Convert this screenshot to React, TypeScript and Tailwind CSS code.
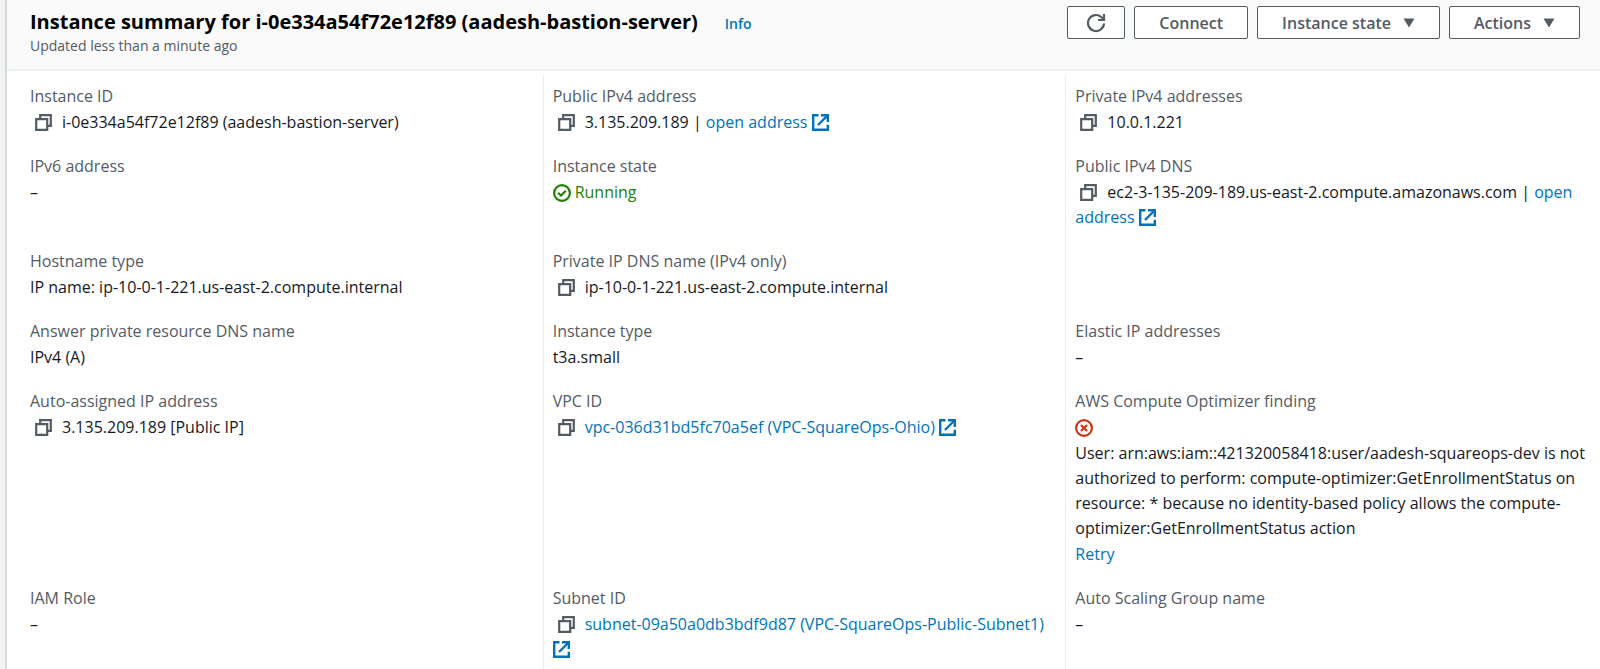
import { ReactNode } from "react";

type Field = { label: string; value: ReactNode } | null;

function CopyButton({ what }: { what: string }) {
  return (
    <button type="button" aria-label={`Copy ${what}`} className="mr-2.5 ml-1.25 inline-block cursor-pointer align-[-3px] text-[#545b64]">
      <svg viewBox="0 0 17 17" className="block size-[17px]" fill="none" stroke="currentColor" strokeWidth="2.2">
        <path d="M1.200 5.200h11v10.600h-11z" />
        <path d="M5.200 5.200V1.200h10.600v10.600h-3.600" />
      </svg>
    </button>
  );
}

function ExternalIcon() {
  return (
    <svg viewBox="0 0 17 17" className="inline-block size-[17px] align-[-3px]" fill="none" stroke="currentColor" strokeWidth="2.400">
      <path d="M6.500 1.200H1.200v14.600h14.600v-5" />
      <path d="M9 1.200h6.800v6.800" />
      <path d="M6 11l9.500-9.500" />
    </svg>
  );
}

function ExternalLink({ children }: { children: ReactNode }) {
  return (
    <a href="#" className="text-[#0073bb] hover:underline">
      {children} <ExternalIcon />
    </a>
  );
}

function Caret() {
  return (
    <svg viewBox="0 0 12 10" className="h-2.5 w-3" fill="currentColor" aria-hidden="true">
      <path d="M0.500 0.500h11L6 9.500z" />
    </svg>
  );
}

const rows: Field[][] = [
  [
    { label: "Instance ID", value: <><CopyButton what="instance ID" />i-0e334a54f72e12f89 (aadesh-bastion-server)</> },
    { label: "Public IPv4 address", value: <><CopyButton what="public IPv4 address" />3.135.209.189 | <ExternalLink>open address</ExternalLink></> },
    { label: "Private IPv4 addresses", value: <><CopyButton what="private IPv4 address" />10.0.1.221</> },
  ],
  [
    { label: "IPv6 address", value: "–" },
    {
      label: "Instance state",
      value: (
        <span className="flex items-center gap-1 text-[#1d8102]">
          <svg viewBox="0 0 18 18" className="size-[18px]" fill="none" stroke="currentColor" strokeWidth="2.200" aria-hidden="true">
            <circle cx="9" cy="9" r="7.900" />
            <path d="M5 8.700l3 2.800 4.800-4.800" />
          </svg>
          Running
        </span>
      ),
    },
    { label: "Public IPv4 DNS", value: <><CopyButton what="public IPv4 DNS" />ec2-3-135-209-189.us-east-2.compute.amazonaws.com | <ExternalLink>open address</ExternalLink></> },
  ],
  [
    { label: "Hostname type", value: "IP name: ip-10-0-1-221.us-east-2.compute.internal" },
    { label: "Private IP DNS name (IPv4 only)", value: <><CopyButton what="private IP DNS name" />ip-10-0-1-221.us-east-2.compute.internal</> },
    null,
  ],
  [
    { label: "Answer private resource DNS name", value: "IPv4 (A)" },
    { label: "Instance type", value: "t3a.small" },
    { label: "Elastic IP addresses", value: "–" },
  ],
  [
    { label: "Auto-assigned IP address", value: <><CopyButton what="auto-assigned IP address" />3.135.209.189 [Public IP]</> },
    { label: "VPC ID", value: <><CopyButton what="VPC ID" /><ExternalLink>vpc-036d31bd5fc70a5ef (VPC-SquareOps-Ohio)</ExternalLink></> },
    {
      label: "AWS Compute Optimizer finding",
      value: (
        <>
          <span className="flex h-[26px] items-center text-[#d13212]">
            <svg viewBox="0 0 18 18" className="size-[18px]" fill="none" stroke="currentColor" strokeWidth="2.200" role="img" aria-label="Error">
              <circle cx="9" cy="9" r="7.900" />
              <path d="M6 6l6 6M12 6l-6 6" />
            </svg>
          </span>
          <p>
            User: arn:aws:iam::421320058418:user/aadesh-squareops-dev is not authorized to perform:
            compute-optimizer:GetEnrollmentStatus on resource: * because no identity-based policy allows the
            compute-optimizer:GetEnrollmentStatus action
          </p>
          <a href="#" className="block leading-[26px] text-[#0073bb] hover:underline">Retry</a>
        </>
      ),
    },
  ],
  [
    { label: "IAM Role", value: "–" },
    { label: "Subnet ID", value: <><CopyButton what="subnet ID" /><ExternalLink>subnet-09a50a0db3bdf9d87 (VPC-SquareOps-Public-Subnet1)</ExternalLink></> },
    { label: "Auto Scaling Group name", value: "–" },
  ],
];

const buttonClass =
  "flex h-[33px] cursor-pointer items-center rounded-[2px] border border-[#545b64] bg-white text-base font-semibold text-[#545b64] hover:bg-[#fafafa]";

export default function App() {
  return (
    <div className="flex min-h-screen bg-[#f2f3f3] pl-[5px] font-['Open_Sans','Noto_Sans',sans-serif] text-base text-[#16191f]">
      <main className="flex min-w-0 flex-1 flex-col border-l-2 border-[#d5dbdb] bg-white">
        <header className="flex items-start justify-between border-b-2 border-[#eff1f1] bg-[#fafafa] pt-1.5 pr-5 pb-3.5 pl-[23px]">
          <div>
            <div className="flex items-baseline gap-[27px]">
              <h1 className="text-xl leading-[31px] font-bold text-black">
                Instance summary for i-0e334a54f72e12f89 (aadesh-bastion-server)
              </h1>
              <a href="#" className="text-sm leading-5 font-semibold text-[#0073bb] hover:underline">Info</a>
            </div>
            <p className="text-sm leading-[18px] text-[#545b64]">Updated less than a minute ago</p>
          </div>
          <div className="flex gap-[9px]">
            <button type="button" aria-label="Refresh" className={buttonClass + " px-[18px]"}>
              <svg viewBox="0 0 20 20" className="size-5" fill="none" stroke="currentColor" strokeWidth="2.200">
                <path d="M18 10.500a8 8 0 1 1-2.500-6.300L17.500 6" />
                <path d="M18 1v6h-6" />
              </svg>
            </button>
            <button type="button" className={buttonClass + " px-6"}>Connect</button>
            <button type="button" className={buttonClass + " gap-3 px-6"}>Instance state <Caret /></button>
            <button type="button" className={buttonClass + " gap-3 px-6"}>Actions <Caret /></button>
          </div>
        </header>
        <dl className="mt-1 mr-3 ml-[13px] grid flex-1 grid-cols-3 grid-rows-[repeat(5,auto)_1fr]">
          {rows.flatMap((row, r) =>
            row.map((field, c) => (
              <div
                key={`${r}-${c}`}
                className={`pr-0.5 leading-[25px] ${r === 0 ? "pt-2" : ""} ${r < rows.length - 1 ? "pb-[18px]" : ""} ${c > 0 ? "border-l border-[#eaeded] pl-[9px]" : "pl-2.5"}`}
              >
                {field && (
                  <>
                    <dt className="leading-[27px] text-[#545b64]">{field.label}</dt>
                    <dd>{field.value}</dd>
                  </>
                )}
              </div>
            )),
          )}
        </dl>
      </main>
    </div>
  );
}
